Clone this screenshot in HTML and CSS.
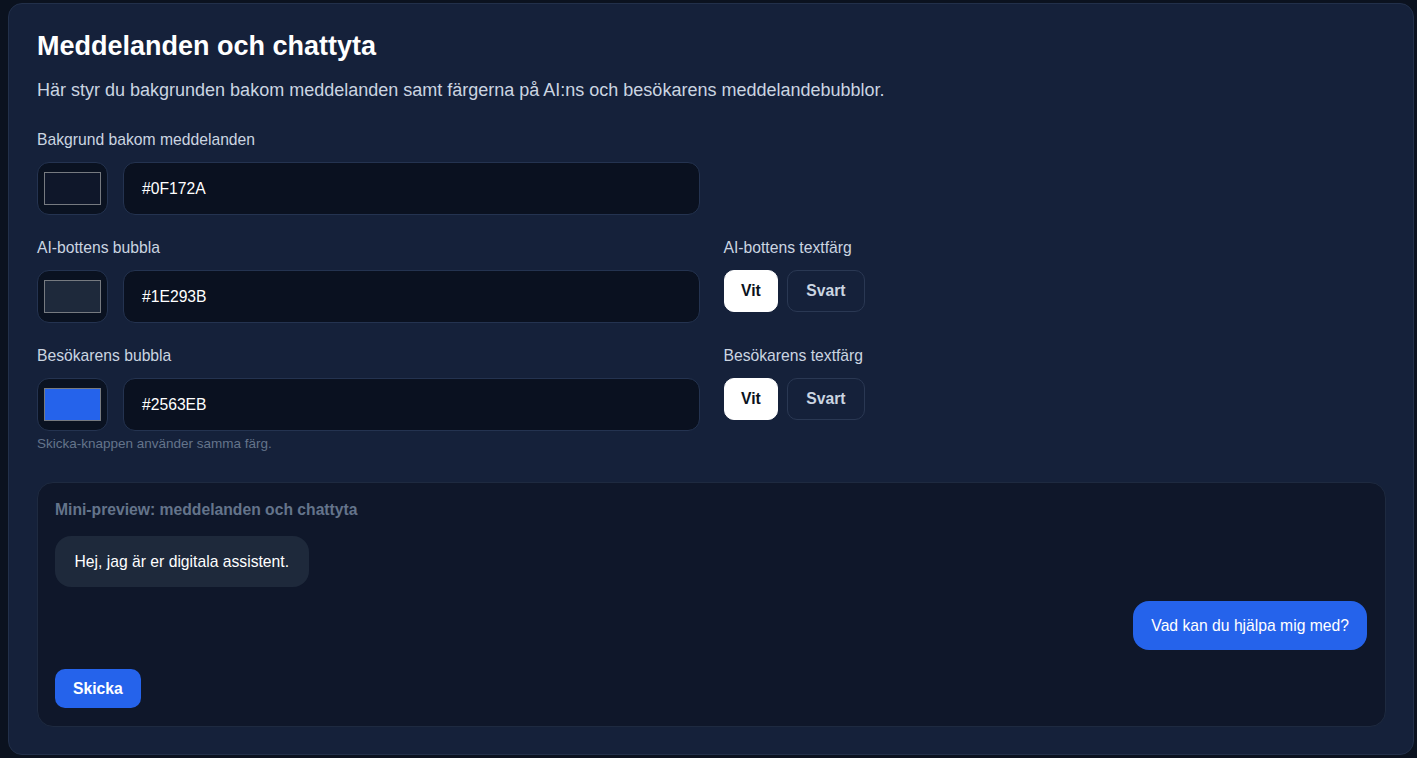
FILE: index.html
```html
<!DOCTYPE html>
<html lang="sv">
<head>
<meta charset="utf-8">
<title>Meddelanden och chattyta</title>
<link rel="stylesheet" href="styles.css">
</head>
<body>
<section class="card">
  <h1 class="title">Meddelanden och chattyta</h1>
  <p class="lead">Här styr du bakgrunden bakom meddelanden samt färgerna på AI:ns och besökarens meddelandebubblor.</p>

  <div class="grid">
    <div class="field">
      <label class="label">Bakgrund bakom meddelanden</label>
      <div class="color-row">
        <div class="swatch-box"><span class="swatch" style="background:#0F172A"></span></div>
        <div class="hex-input">#0F172A</div>
      </div>
    </div>
    <div></div>

    <div class="field">
      <label class="label">AI-bottens bubbla</label>
      <div class="color-row">
        <div class="swatch-box"><span class="swatch" style="background:#1E293B"></span></div>
        <div class="hex-input">#1E293B</div>
      </div>
    </div>
    <div class="field">
      <label class="label">AI-bottens textfärg</label>
      <div class="toggle-row">
        <button class="toggle active">Vit</button>
        <button class="toggle">Svart</button>
      </div>
    </div>

    <div class="field">
      <label class="label">Besökarens bubbla</label>
      <div class="color-row">
        <div class="swatch-box"><span class="swatch" style="background:#2563EB"></span></div>
        <div class="hex-input">#2563EB</div>
      </div>
      <p class="hint">Skicka-knappen använder samma färg.</p>
    </div>
    <div class="field">
      <label class="label">Besökarens textfärg</label>
      <div class="toggle-row">
        <button class="toggle active">Vit</button>
        <button class="toggle">Svart</button>
      </div>
    </div>
  </div>

  <div class="preview">
    <div class="preview-title">Mini-preview: meddelanden och chattyta</div>
    <div class="msg msg-ai">Hej, jag är er digitala assistent.</div>
    <div class="msg msg-user">Vad kan du hjälpa mig med?</div>
    <button class="send">Skicka</button>
  </div>
</section>
</body>
</html>
```

FILE: styles.css
```css
* { box-sizing: border-box; }

html, body {
  margin: 0;
  background: #0b121f;
}

body {
  padding: 3px 3px 3px 8px;
  font-family: "Liberation Sans", Arial, sans-serif;
  color: #e2e8f0;
}

.card {
  background: #15213a;
  border: 1px solid #22304a;
  border-radius: 14px;
  padding: 26px 27px 27px 28px;
}

.title {
  margin: 0;
  font-size: 27px;
  line-height: 32px;
  font-weight: 700;
  color: #ffffff;
}

.lead {
  margin: 16px 0 0;
  font-size: 18px;
  line-height: 24px;
  color: #cbd5e1;
}

.grid {
  margin-top: 29px;
  display: grid;
  grid-template-columns: 1fr 1fr;
  column-gap: 24px;
  row-gap: 24px;
}

.field {
  display: flex;
  flex-direction: column;
}

.label {
  font-size: 15.7px;
  line-height: 18px;
  color: #cbd5e1;
  margin-bottom: 13px;
}

.color-row {
  display: flex;
  gap: 15px;
}

.swatch-box {
  width: 71px;
  height: 53px;
  flex: none;
  background: #0a1221;
  border: 1px solid #243350;
  border-radius: 12px;
  display: flex;
  align-items: center;
  justify-content: center;
}

.swatch {
  display: block;
  width: 57px;
  height: 33px;
  border: 1px solid #767a80;
}

.hex-input {
  flex: 1;
  height: 53px;
  background: #0a1120;
  border: 1px solid #243350;
  border-radius: 12px;
  padding: 0 18px;
  display: flex;
  align-items: center;
  font-size: 15.7px;
  color: #ffffff;
}

.hint {
  margin: 5px 0 0;
  font-size: 13.5px;
  line-height: 16px;
  color: #64748b;
}

.toggle-row {
  display: flex;
  gap: 9px;
}

.toggle {
  height: 42px;
  padding: 0 18px;
  border-radius: 10px;
  border: 1px solid #2a3853;
  background: transparent;
  color: #cbd5e1;
  font-family: inherit;
  font-size: 15.7px;
  font-weight: 700;
}

.toggle.active {
  background: #ffffff;
  border-color: #ffffff;
  color: #0b1220;
  padding: 0 16.5px;
}

.preview {
  margin-top: 30px;
  background: #0f172a;
  border: 1px solid #1e2a40;
  border-radius: 16px;
  padding: 18px 18px 18px 17px;
  display: flex;
  flex-direction: column;
  align-items: flex-start;
}

.preview-title {
  font-size: 15.7px;
  line-height: 18px;
  font-weight: 700;
  color: #64748b;
  margin-bottom: 17px;
}

.msg {
  font-size: 15.7px;
  line-height: 20px;
  color: #ffffff;
  padding: 15.5px 19.5px;
  border-radius: 16px;
}

.msg-ai {
  background: #1e293b;
}

.msg-user {
  background: #2563eb;
  align-self: flex-end;
  margin-top: 14px;
  padding: 14.5px 18px;
}

.send {
  margin-top: 19px;
  height: 39px;
  padding: 0 18px;
  border: none;
  border-radius: 10px;
  background: #2563eb;
  color: #ffffff;
  font-family: inherit;
  font-size: 15.7px;
  font-weight: 700;
}
```
